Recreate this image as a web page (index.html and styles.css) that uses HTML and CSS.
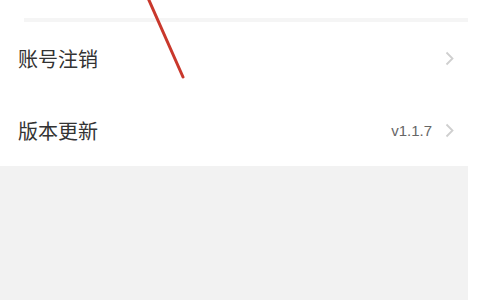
FILE: index.html
```html
<!DOCTYPE html>
<html lang="zh-CN">
<head>
    <meta charset="UTF-8">
    <meta name="viewport" content="width=device-width, initial-scale=1.0">
    <title>设置</title>
    <link rel="stylesheet" href="styles.css">
</head>
<body>

    <div class="page">
        <div class="divider"></div>

        <div class="row">
            <span class="label">账号注销</span>
            <span class="right">
                <svg class="chevron" width="9" height="15" viewBox="0 0 9 15"><path d="M1.5 1.5 L7.5 7.5 L1.5 13.5" fill="none" stroke="#cfcfcf" stroke-width="1.8"/></svg>
            </span>
        </div>

        <div class="row">
            <span class="label">版本更新</span>
            <span class="right">
                <span class="version">v1.1.7</span>
                <svg class="chevron" width="9" height="15" viewBox="0 0 9 15"><path d="M1.5 1.5 L7.5 7.5 L1.5 13.5" fill="none" stroke="#cfcfcf" stroke-width="1.8"/></svg>
            </span>
        </div>

        <div class="rest"></div>
    </div>

    <!-- red annotation stroke -->
    <svg class="mark" width="60" height="90" viewBox="0 0 60 90">
        <line x1="4" y1="-2" x2="39" y2="77" stroke="#c9382c" stroke-width="3" stroke-linecap="round"/>
    </svg>

</body>
</html>
```

FILE: styles.css
```css
body {
    margin: 0;
    padding: 0;
    background: #fff;
    font-family: "Noto Sans CJK SC", "Noto Sans", sans-serif;
    color: #333;
}
.page {
    width: 468px;
    height: 300px;
    display: flex;
    flex-direction: column;
    background: #fff;
}
.divider {
    height: 4px;
    margin: 18px 0 0 24px;
    background: #f5f5f5;
}
.row {
    height: 72px;
    display: flex;
    align-items: center;
    justify-content: space-between;
    padding: 0 14px 0 18px;
}
.label {
    font-size: 20px;
    color: #333;
}
.right {
    display: flex;
    align-items: center;
    gap: 13px;
}
.version {
    font-family: "Liberation Sans", sans-serif;
    font-size: 15px;
    color: #666;
}
.chevron {
    display: block;
}
.rest {
    flex: 1;
    background: #f2f2f2;
}
.mark {
    position: absolute;
    left: 144px;
    top: 0;
}
```
